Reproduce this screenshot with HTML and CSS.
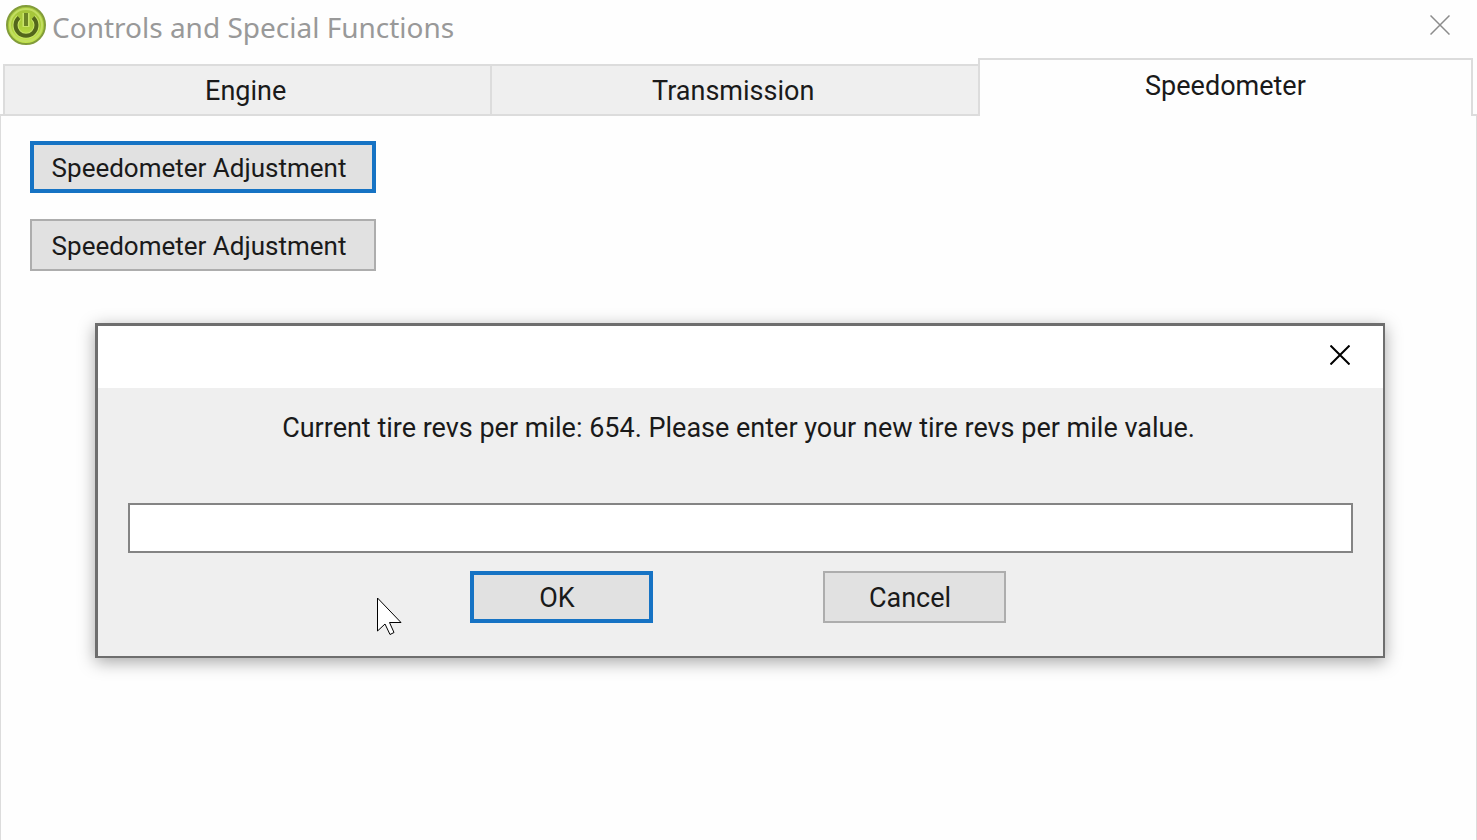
FILE: index.html
```html
<!DOCTYPE html>
<html lang="en">
<head>
    <meta charset="UTF-8">
    <meta name="viewport" content="width=device-width, initial-scale=1.0">
    <title>Controls and Special Functions</title>
    <link rel="stylesheet" href="styles.css">
</head>
<body>

<header class="titlebar">
    <svg class="app-icon" viewBox="0 0 40 40" aria-hidden="true">
        <defs>
            <linearGradient id="green" x1="0" y1="0" x2="0" y2="1">
                <stop offset="0" stop-color="#a5c33c"/>
                <stop offset="0.5" stop-color="#a9cc38"/>
                <stop offset="1" stop-color="#c6e84c"/>
            </linearGradient>
        </defs>
        <circle cx="20" cy="20" r="19" fill="url(#green)" stroke="#829c3a" stroke-width="2"/>
        <circle cx="20" cy="20" r="16" fill="none" stroke="#c3de62" stroke-width="2"/>
        <path d="M13 12.5a10.500 10.500 0 1 0 14 0" fill="none" stroke="#c9e468" stroke-width="6"/>
        <path d="M13 12.5a10.500 10.500 0 1 0 14 0" fill="none" stroke="#53661b" stroke-width="4"/>
        <path d="M20 8v14" fill="none" stroke="#c9e468" stroke-width="7"/>
        <path d="M20 8v13" fill="none" stroke="#6c8426" stroke-width="4"/>
    </svg>
    <h1 class="title">Controls and Special Functions</h1>
    <button type="button" class="close" aria-label="Close window">
        <svg viewBox="0 0 20 20" aria-hidden="true"><path d="M0.5 0.5l19 19M19.5 0.5l-19 19"/></svg>
    </button>
</header>

<div class="tabs" role="tablist">
    <button type="button" class="tab" role="tab" aria-selected="false">Engine</button>
    <button type="button" class="tab" role="tab" aria-selected="false">Transmission</button>
    <button type="button" class="tab active" role="tab" aria-selected="true" aria-controls="speedometer">Speedometer</button>
</div>

<main class="panel" id="speedometer" role="tabpanel">
    <button type="button" class="btn default">Speedometer Adjustment</button>
    <button type="button" class="btn">Speedometer Adjustment</button>
</main>

<form class="dialog" role="dialog" aria-labelledby="revsLabel">
    <div class="dialog-bar">
        <button type="button" class="close dark" aria-label="Close dialog">
            <svg viewBox="0 0 20 20" aria-hidden="true"><path d="M0.5 0.5l19 19M19.5 0.5l-19 19"/></svg>
        </button>
    </div>
    <div class="dialog-body">
        <label class="message" id="revsLabel" for="revs">Current tire revs per mile: 654. Please enter your new tire revs per mile value.</label>
        <input class="revs" type="text" id="revs" name="revs">
        <div class="actions">
            <button type="button" class="btn default">OK</button>
            <button type="button" class="btn">Cancel</button>
        </div>
    </div>
</form>

<svg class="cursor" viewBox="0 0 26 38" aria-hidden="true">
    <path d="M1.500 1v33l7.500-7 5 10.500 4-2-4.500-10h11.500z" fill="#fff" stroke="#000" stroke-width="1"/>
</svg>

</body>
</html>
```
FILE: styles.css
```css
* {
    box-sizing: border-box;
}
body {
    font-family: Roboto, "Liberation Sans", Arial, sans-serif;
    font-size: 27px;
    line-height: 32px;
    color: #1a1a1a;
    background-color: #fefefe;
    margin: 0;
    min-height: 100vh;
    display: flex;
    flex-direction: column;
    position: relative;
}
button, input {
    font: inherit;
    color: inherit;
}

/* title bar */
.titlebar {
    display: flex;
    align-items: center;
    gap: 6px;
    height: 58px;
    padding: 0 27px 8px 6px;
}
.app-icon {
    width: 40px;
    height: 40px;
}
.title {
    flex: 1;
    margin: 0;
    padding-top: 4px;
    font-family: "Noto Sans", "Open Sans", sans-serif;
    font-size: 28px;
    font-weight: 400;
    color: #999;
}
.close {
    display: flex;
    padding: 0;
    border: none;
    background: none;
}
.close svg {
    width: 20px;
    height: 20px;
    fill: none;
    stroke: #8c8c8c;
    stroke-width: 1.5;
}
.close.dark svg {
    stroke: #000;
    stroke-width: 2;
}

/* tabs */
.tabs {
    display: flex;
    align-items: flex-end;
    padding: 0 4px 0 3px;
}
.tab {
    flex: 1;
    height: 52px;
    padding: 2px 4px 0 0;
    border: 2px solid #dcdcdc;
    background-color: #efefef;
}
.tab + .tab {
    margin-left: -2px;
}
.tab.active {
    flex-grow: 1.02;
    height: 58px;
    padding: 0 0 4px;
    border-bottom: none;
    background-color: #fefefe;
    z-index: 1;
}
.panel {
    flex: 1;
    display: flex;
    flex-direction: column;
    align-items: flex-start;
    gap: 26px;
    margin-top: -2px;
    padding: 25px 29px;
    border: 1px solid #dcdcdc;
    border-top-width: 2px;
    border-bottom: none;
}

/* push buttons */
.btn {
    height: 52px;
    padding: 2px 8px 0 0;
    border: 2px solid #adadad;
    background-color: #e1e1e1;
    white-space: nowrap;
}
.btn.default {
    border: 4px solid #1673c4;
}
.panel .btn {
    width: 346px;
    font-size: 26px;
}

/* dialog */
.dialog {
    position: absolute;
    top: 323px;
    left: 95px;
    right: 92px;
    border: 3px solid #6e6e6e;
    border-right-width: 2px;
    border-bottom-width: 2px;
    background-color: #efefef;
    box-shadow: 0 4px 16px rgba(0, 0, 0, 0.35);
}
.dialog-bar {
    display: flex;
    justify-content: flex-end;
    align-items: center;
    height: 62px;
    padding: 0 33px 4px 0;
    background-color: #fff;
}
.dialog-body {
    padding: 24px 30px 33px;
}
.message {
    display: block;
    padding-right: 4px;
    text-align: center;
}
.revs {
    display: block;
    width: 100%;
    height: 50px;
    margin-top: 59px;
    padding: 0 8px;
    border: 2px solid #848484;
    border-radius: 0;
    background-color: #fff;
}
.actions {
    display: flex;
    justify-content: center;
    gap: 170px;
    margin-top: 18px;
    padding-right: 6px;
}
.actions .btn {
    width: 183px;
}

.cursor {
    position: absolute;
    top: 597px;
    left: 376px;
    width: 26px;
    height: 38px;
}
```
